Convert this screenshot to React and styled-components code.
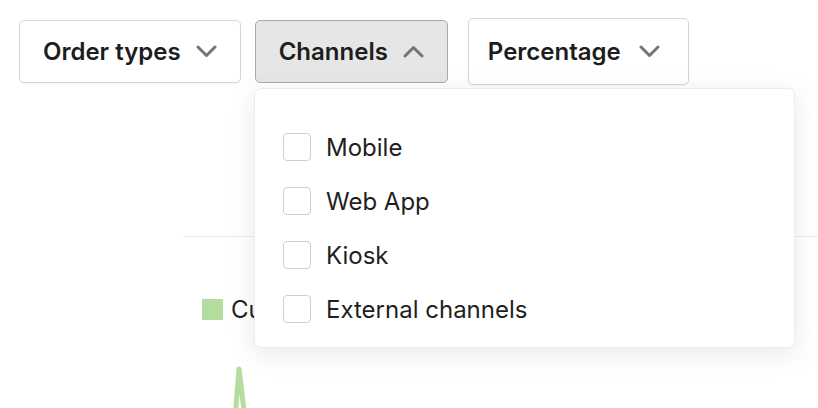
import React from "react";
import styled, { createGlobalStyle } from "styled-components";

const Global = createGlobalStyle`
  html, body { margin: 0; padding: 0; background: #fff; }
  body { font-family: Inter, "Noto Sans", sans-serif; color: #1d1d1d; }
`;

const Page = styled.div`
  position: relative;
  width: 818px;
  height: 408px;
  overflow: hidden;
  padding: 18px 0 0 19px;
  box-sizing: border-box;
`;

const Toolbar = styled.div`
  display: flex;
  align-items: center;
  height: 67px;
`;

const FilterButton = styled.button`
  display: flex;
  align-items: center;
  gap: ${(p) => p.$gap || 15}px;
  height: ${(p) => (p.$tall ? 67 : 63)}px;
  margin-left: ${(p) => p.$ml || 0}px;
  padding: 0 ${(p) => p.$pr || 23}px 0 ${(p) => p.$pl || 23}px;
  box-sizing: border-box;
  border-radius: 5px;
  border: 1px solid ${(p) => (p.$active ? "#a9a9a9" : "#d6d6d6")};
  background: ${(p) => (p.$active ? "#e6e6e6" : "#fff")};
  box-shadow: ${(p) => (p.$active ? "none" : "0 1px 2px rgba(0,0,0,0.05)")};
  font-family: Inter, "Noto Sans", sans-serif;
  font-size: 24px;
  font-weight: 600;
  color: #1d1d1d;
  cursor: pointer;
`;

const Chevron = ({ up }) => (
  <svg width="21" height="13" viewBox="0 0 21 13" fill="none">
    <path
      d={up ? "M2 11 L10.5 2.5 L19 11" : "M2 2 L10.5 10.5 L19 2"}
      stroke="#757575"
      strokeWidth="3"
      strokeLinecap="round"
      strokeLinejoin="round"
    />
  </svg>
);

const Chart = styled.div`
  margin: 151px 0 0 164px;
  border-top: 1px solid #ececec;
`;

const Legend = styled.div`
  display: flex;
  align-items: center;
  gap: 8px;
  margin: 58px 0 0 19px;
  font-size: 24px;
  color: #222;
`;

const Swatch = styled.span`
  width: 21px;
  height: 21px;
  background: #b3dc9f;
`;

const Spike = styled.svg`
  display: block;
  margin: 35px 0 0 38px;
`;

const Panel = styled.div`
  position: absolute;
  left: 254px;
  top: 88px;
  width: 541px;
  height: 260px;
  box-sizing: border-box;
  padding: 31px 28px 0;
  background: #fff;
  border: 1px solid #ececec;
  border-radius: 7px;
  box-shadow: 0 6px 28px rgba(0, 0, 0, 0.09);
`;

const Option = styled.label`
  display: flex;
  align-items: center;
  gap: 15px;
  height: 54px;
  font-size: 24px;
  color: #1f1f1f;
`;

const Box = styled.span`
  width: 28px;
  height: 28px;
  box-sizing: border-box;
  border: 1px solid #cfcfcf;
  border-radius: 4px;
  background: #fff;
`;

const options = ["Mobile", "Web App", "Kiosk", "External channels"];

export default function App() {
  return (
    <Page>
      <Global />
      <Toolbar>
        <FilterButton>
          Order types <Chevron />
        </FilterButton>
        <FilterButton $active $ml={14}>
          Channels <Chevron up />
        </FilterButton>
        <FilterButton $tall $ml={20} $pl={19} $pr={28} $gap={18}>
          Percentage <Chevron />
        </FilterButton>
      </Toolbar>
      <Chart>
        <Legend>
          <Swatch />
          Cu
        </Legend>
        <Spike width="40" height="60" viewBox="0 0 40 60">
          <polyline
            points="14,60 18,10 24,60"
            fill="none"
            stroke="#b3dc9f"
            strokeWidth="5"
            strokeLinecap="round"
            strokeLinejoin="round"
          />
        </Spike>
      </Chart>
      <Panel>
        {options.map((o) => (
          <Option key={o}>
            <Box />
            {o}
          </Option>
        ))}
      </Panel>
    </Page>
  );
}
